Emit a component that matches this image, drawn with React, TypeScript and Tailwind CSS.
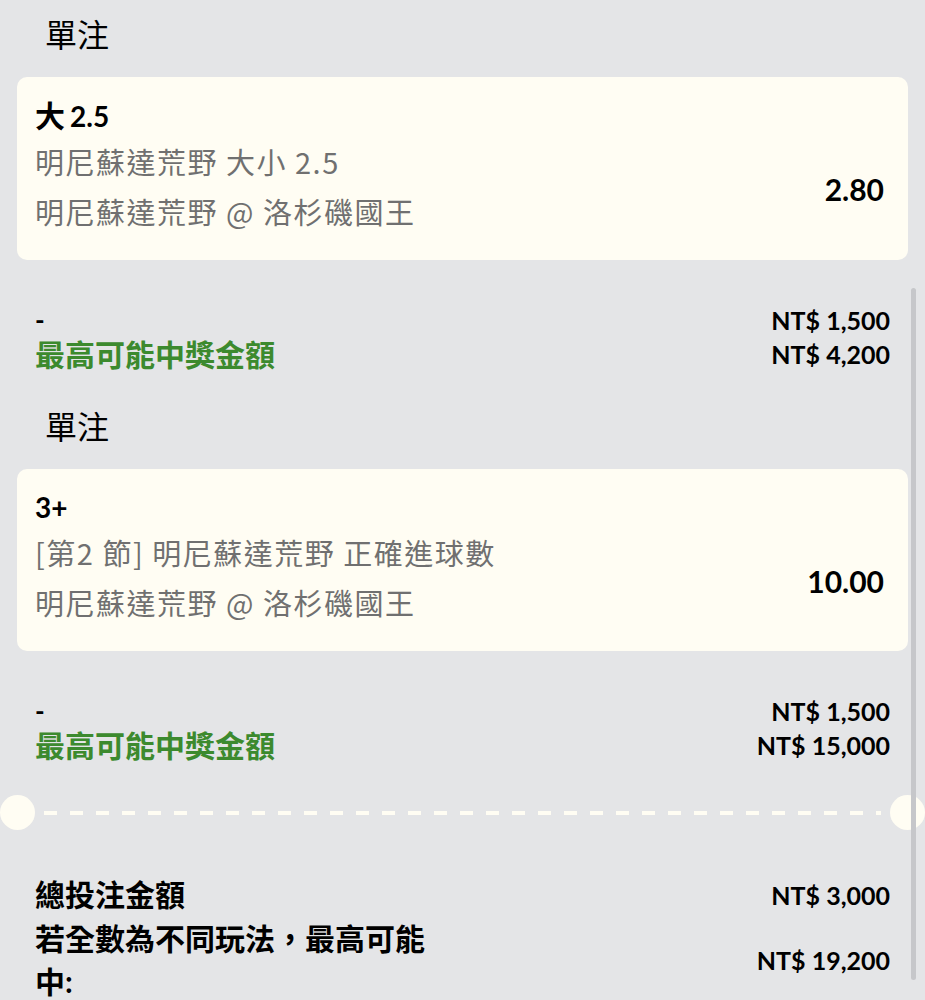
import React from 'react';

type Bet = {
  pickCjk?: string;
  pick: string;
  market: string;
  match: string;
  odds: string;
  stake: string;
  payout: string;
};

const bets: Bet[] = [
  {
    pickCjk: '大',
    pick: '2.5',
    market: '明尼蘇達荒野 大小 2.5',
    match: '明尼蘇達荒野 @ 洛杉磯國王',
    odds: '2.80',
    stake: 'NT$ 1,500',
    payout: 'NT$ 4,200',
  },
  {
    pick: '3+',
    market: '[第2 節] 明尼蘇達荒野 正確進球數',
    match: '明尼蘇達荒野 @ 洛杉磯國王',
    odds: '10.00',
    stake: 'NT$ 1,500',
    payout: 'NT$ 15,000',
  },
];

const BetBlock: React.FC<{ bet: Bet }> = ({ bet }) => (
  <div>
    <h3 className="pl-[45px] text-[32px] leading-[40px] text-black">單注</h3>

    {/* Bet card */}
    <div className="mx-[17px] mt-[22px] flex justify-between rounded-[10px] bg-[#fffdf3] pb-[24px] pl-[18px] pr-[24px] pt-[18px]">
      <div>
        <p className="text-[28px] font-bold leading-[40px] text-black">
          {bet.pickCjk && <span className="mr-[5px] text-[30px]">{bet.pickCjk}</span>}
          {bet.pick}
        </p>
        <p className="font-['Noto_Sans_CJK_TC',sans-serif] text-[29px] leading-[50px] tracking-[1.5px] text-[#707070]">{bet.market}</p>
        <p className="font-['Noto_Sans_CJK_TC',sans-serif] text-[29px] leading-[50px] tracking-[1.5px] text-[#707070]">{bet.match}</p>
      </div>
      <div className="flex items-center pt-[48px]">
        <span className="text-[30px] font-bold text-black">{bet.odds}</span>
      </div>
    </div>

    {/* Stake / payout */}
    <div className="mt-[43px] flex justify-between px-[35px]">
      <div>
        <p className="text-[26px] font-bold leading-[34px] text-black">-</p>
        <p className="text-[30px] font-bold leading-[34px] text-[#3c8a2e]">最高可能中獎金額</p>
      </div>
      <div className="text-right">
        <p className="text-[25px] font-bold leading-[34px] text-black">{bet.stake}</p>
        <p className="text-[25px] font-bold leading-[34px] text-black">{bet.payout}</p>
      </div>
    </div>
  </div>
);

export default function App() {
  return (
    <div
      className="relative h-[1000px] overflow-hidden bg-[#e4e5e7] pt-[15px]"
      style={{ fontFamily: 'Lato, "Noto Sans CJK TC", "Noto Sans", sans-serif' }}
    >
      <div className="flex flex-col gap-[36px]">
        {bets.map((bet, i) => (
          <BetBlock key={i} bet={bet} />
        ))}
      </div>

      {/* Ticket divider */}
      <div className="mt-[33px] flex items-center">
        <div className="h-[35px] w-[35px] shrink-0 rounded-full bg-[#fffdf3]" />
        <div className="mx-[9px] h-[4px] flex-1 bg-[repeating-linear-gradient(90deg,#fffdf3_0px,#fffdf3_13px,transparent_13px,transparent_26px)]" />
        <div className="h-[35px] w-[35px] shrink-0 rounded-full bg-[#fffdf3]" />
      </div>

      {/* Totals */}
      <div className="mt-[42px] flex flex-col gap-[1px] px-[35px]">
        <div className="flex items-center justify-between">
          <p className="text-[30px] font-bold leading-[44px] text-black">總投注金額</p>
          <p className="mt-[4px] text-[25px] font-bold text-black">NT$ 3,000</p>
        </div>
        <div className="flex items-center justify-between">
          <p className="w-[400px] text-[30px] font-bold leading-[43px] text-black">若全數為不同玩法，最高可能中:</p>
          <p className="mt-[2px] text-[25px] font-bold text-black">NT$ 19,200</p>
        </div>
      </div>

      {/* Scrollbar thumb */}
      <div className="absolute right-[9px] top-[288px] h-[692px] w-[5px] rounded-full bg-[#c6c7ca]" />
    </div>
  );
}
